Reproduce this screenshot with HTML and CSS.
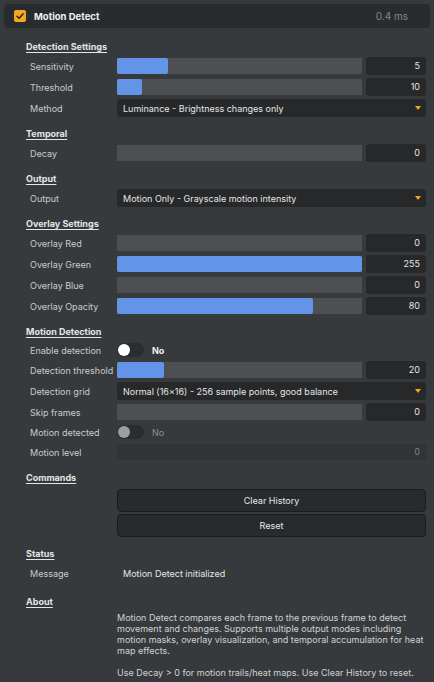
FILE: index.html
```html
<!DOCTYPE html>
<html>
<head>
    <title>Motion Detect</title>
    <link rel="stylesheet" href="styles.css">
</head>
<body>
    <div class="panel-head">
        <span class="check">
            <svg width="12" height="12" viewBox="0 0 12 12"><path d="M3 6.2 L5.1 8.2 L9 3.9" fill="none" stroke="#2a2416" stroke-width="1.5" stroke-linecap="round" stroke-linejoin="round"/></svg>
        </span>
        <span class="panel-title">Motion Detect</span>
        <span class="panel-time">0.4 ms</span>
    </div>

    <div class="panel-body">
        <section class="group">
            <h2>Detection Settings</h2>
            <div class="row">
                <span class="label">Sensitivity</span>
                <div class="slider"><div class="fill" style="width: 21%"></div></div>
                <span class="num">5</span>
            </div>
            <div class="row">
                <span class="label">Threshold</span>
                <div class="slider"><div class="fill" style="width: 10%"></div></div>
                <span class="num">10</span>
            </div>
            <div class="row">
                <span class="label">Method</span>
                <div class="select">Luminance - Brightness changes only<i class="arrow"></i></div>
            </div>
        </section>

        <section class="group">
            <h2>Temporal</h2>
            <div class="row">
                <span class="label">Decay</span>
                <div class="slider"></div>
                <span class="num">0</span>
            </div>
        </section>

        <section class="group">
            <h2>Output</h2>
            <div class="row">
                <span class="label">Output</span>
                <div class="select">Motion Only - Grayscale motion intensity<i class="arrow"></i></div>
            </div>
        </section>

        <section class="group">
            <h2>Overlay Settings</h2>
            <div class="row">
                <span class="label">Overlay Red</span>
                <div class="slider"></div>
                <span class="num">0</span>
            </div>
            <div class="row">
                <span class="label">Overlay Green</span>
                <div class="slider"><div class="fill" style="width: 100%"></div></div>
                <span class="num">255</span>
            </div>
            <div class="row">
                <span class="label">Overlay Blue</span>
                <div class="slider"></div>
                <span class="num">0</span>
            </div>
            <div class="row">
                <span class="label">Overlay Opacity</span>
                <div class="slider"><div class="fill" style="width: 80%"></div></div>
                <span class="num">80</span>
            </div>
        </section>

        <section class="group">
            <h2>Motion Detection</h2>
            <div class="row row-toggle">
                <span class="label">Enable detection</span>
                <span class="toggle"><i class="knob"></i></span>
                <span class="toggle-text">No</span>
            </div>
            <div class="row">
                <span class="label">Detection threshold</span>
                <div class="slider"><div class="fill" style="width: 19%"></div></div>
                <span class="num">20</span>
            </div>
            <div class="row">
                <span class="label">Detection grid</span>
                <div class="select">Normal (16×16) - 256 sample points, good balance<i class="arrow"></i></div>
            </div>
            <div class="row">
                <span class="label">Skip frames</span>
                <div class="slider"></div>
                <span class="num">0</span>
            </div>
            <div class="row row-toggle disabled">
                <span class="label">Motion detected</span>
                <span class="toggle"><i class="knob"></i></span>
                <span class="toggle-text">No</span>
            </div>
            <div class="row">
                <span class="label">Motion level</span>
                <div class="readout">0</div>
            </div>
        </section>

        <section class="group">
            <h2>Commands</h2>
            <div class="buttons">
                <button class="cmd">Clear History</button>
                <button class="cmd">Reset</button>
            </div>
        </section>

        <section class="group">
            <h2>Status</h2>
            <div class="row row-text">
                <span class="label">Message</span>
                <span class="message">Motion Detect initialized</span>
            </div>
        </section>

        <section class="group group-about">
            <h2>About</h2>
            <div class="about">
                <p>Motion Detect compares each frame to the previous frame to detect movement and changes. Supports multiple output modes including motion masks, overlay visualization, and temporal accumulation for heat map effects.</p>
                <p>Use Decay &gt; 0 for motion trails/heat maps. Use Clear History to reset.</p>
            </div>
        </section>
    </div>
</body>
</html>
```

FILE: styles.css
```css
body {
    margin: 0;
    padding: 4px;
    background-color: #373a3d;
    color: #d2d4d5;
    font-family: Inter, "Noto Sans", sans-serif;
    font-size: 9px;
}

/* header bar */
.panel-head {
    display: flex;
    align-items: center;
    height: 24px;
    padding: 0 22px 0 10px;
    background-color: #292c2e;
    border-radius: 4px;
}

.check {
    display: flex;
    width: 12px;
    height: 12px;
    background-color: #f5a623;
    border-radius: 2px;
}

.panel-title {
    margin-left: 8px;
    font-size: 9.5px;
    font-weight: bold;
    color: #f2f2f2;
}

.panel-time {
    margin-left: auto;
    font-size: 10px;
    color: #85888a;
}

/* groups */
.panel-body {
    padding: 0 4px 0 22px;
}

.group {
    margin-top: 10px;
}

.group:first-child {
    margin-top: 12px;
}

.group-about {
    margin-top: 13px;
}

h2 {
    margin: 0 0 3px 0;
    height: 14px;
    line-height: 14px;
    font-size: 9px;
    font-weight: bold;
    color: #e4e5e6;
    text-decoration: underline;
    text-underline-offset: 2px;
}

.row {
    display: flex;
    align-items: center;
    height: 18px;
    margin-bottom: 3px;
}

.row-toggle {
    height: 16px;
}

.label {
    width: 87px;
    padding-left: 4px;
    flex-shrink: 0;
    color: #c9cbcc;
    white-space: nowrap;
}

.slider {
    flex: 1;
    height: 16px;
    background-color: #4e4f50;
}

.fill {
    height: 100%;
    background-color: #6394e8;
    border-radius: 2px;
}

.num {
    width: 60px;
    height: 18px;
    margin-left: 4px;
    padding-right: 6px;
    box-sizing: border-box;
    line-height: 18px;
    text-align: right;
    background-color: #262829;
    border-radius: 3px;
    color: #e6e6e6;
}

.select {
    flex: 1;
    display: flex;
    align-items: center;
    height: 18px;
    padding: 0 5px 0 6px;
    background-color: #262829;
    border-radius: 3px;
    color: #e6e6e6;
}

.arrow {
    margin-left: auto;
    width: 0;
    height: 0;
    border-left: 3px solid transparent;
    border-right: 3px solid transparent;
    border-top: 4px solid #f5a623;
}

.toggle {
    position: relative;
    width: 27px;
    height: 14px;
    background-color: #2a2d2f;
    border-radius: 7px;
}

.knob {
    position: absolute;
    left: 1px;
    top: 1px;
    width: 12px;
    height: 12px;
    border-radius: 50%;
    background-color: #ffffff;
}

.toggle-text {
    margin-left: 8px;
    font-weight: bold;
    color: #f0f0f0;
}

.disabled .knob {
    background-color: #9c9ea0;
}

.disabled .toggle-text {
    font-weight: normal;
    color: #8e9193;
}

.readout {
    flex: 1;
    height: 16px;
    padding-right: 6px;
    line-height: 16px;
    text-align: right;
    background-color: #313436;
    border-radius: 3px;
    color: #7d8082;
}

/* commands */
.buttons {
    display: flex;
    flex-direction: column;
    gap: 2px;
    margin-left: 91px;
    padding-top: 1px;
}

.cmd {
    height: 23px;
    font-family: inherit;
    font-size: 9px;
    color: #e6e6e6;
    background-color: #282b2d;
    border: 1.5px solid #1a1c1d;
    border-radius: 4px;
}

.row-text {
    margin-top: 3px;
}

.message {
    padding-left: 6px;
    color: #e6e6e6;
}

.about {
    margin-left: 91px;
    margin-right: -3px;
    line-height: 11px;
    color: #d0d2d3;
}

.about p {
    margin: 0 0 11px 0;
}
```
